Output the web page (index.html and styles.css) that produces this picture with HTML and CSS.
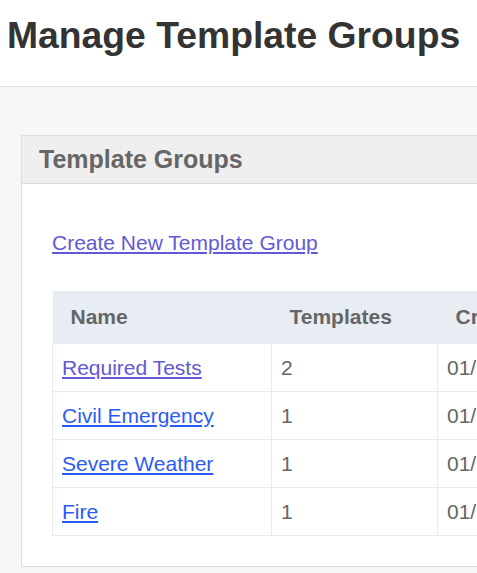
FILE: index.html
```html
<!DOCTYPE html>
<html>
<head>
<meta charset="utf-8">
<link rel="stylesheet" href="styles.css">
</head>
<body>
<div class="page-head">
  <h1 class="title">Manage Template Groups</h1>
</div>
<div class="content">
  <div class="panel">
    <div class="panel-heading">Template Groups</div>
    <div class="panel-body">
      <a class="link visited create" href="#">Create New Template Group</a>
      <table class="grid">
        <thead>
          <tr>
            <th class="c-name">Name</th>
            <th class="c-count">Templates</th>
            <th class="c-date">Created</th>
          </tr>
        </thead>
        <tbody>
          <tr><td><a class="link visited" href="#">Required Tests</a></td><td>2</td><td>01/12/2021</td></tr>
          <tr><td><a class="link" href="#">Civil Emergency</a></td><td>1</td><td>01/12/2021</td></tr>
          <tr><td><a class="link" href="#">Severe Weather</a></td><td>1</td><td>01/12/2021</td></tr>
          <tr><td><a class="link" href="#">Fire</a></td><td>1</td><td>01/12/2021</td></tr>
        </tbody>
      </table>
    </div>
  </div>
</div>
</body>
</html>
```

FILE: styles.css
```css
html, body {
  margin: 0;
  padding: 0;
  overflow: hidden;
  background: #f7f7f7;
  font-family: "Liberation Sans", Arial, sans-serif;
}
.page-head {
  background: #ffffff;
  height: 86px;
  border-bottom: 1px solid #e4e4e4;
  box-sizing: content-box;
}
.title {
  margin: 0;
  padding: 14px 0 0 7px;
  font-size: 37.3px;
  line-height: 42px;
  font-weight: bold;
  color: #333333;
  white-space: nowrap;
}
.content {
  padding: 48px 0 0 21px;
  width: 900px;
}
.panel {
  background: #ffffff;
  border: 1px solid #dddddd;
  width: 820px;
}
.panel-heading {
  height: 47px;
  display: flex;
  align-items: center;
  padding-left: 17px;
  background: #efefef;
  border-bottom: 1px solid #dddddd;
  font-size: 25px;
  font-weight: bold;
  color: #666666;
}
.panel-body {
  padding: 47px 0 30px 30px;
}
.link {
  color: #2a5cf5;
  text-decoration: underline;
  font-size: 21px;
}
.link.visited {
  color: #6459d4;
}
.create {
  display: block;
  line-height: 24px;
  margin-bottom: 36px;
  width: max-content;
}
.grid {
  border-collapse: collapse;
  font-size: 21px;
  color: #666666;
}
.grid th {
  background: #e8edf4;
  height: 52px;
  padding: 0 18px;
  text-align: left;
  font-weight: bold;
  color: #666666;
  white-space: nowrap;
}
.grid td {
  height: 47px;
  padding: 0 9px;
  border: 1px solid #e6ebf2;
  white-space: nowrap;
}
.c-name { width: 183px; }
.c-count { width: 130px; }
.c-date { width: 200px; }
```
